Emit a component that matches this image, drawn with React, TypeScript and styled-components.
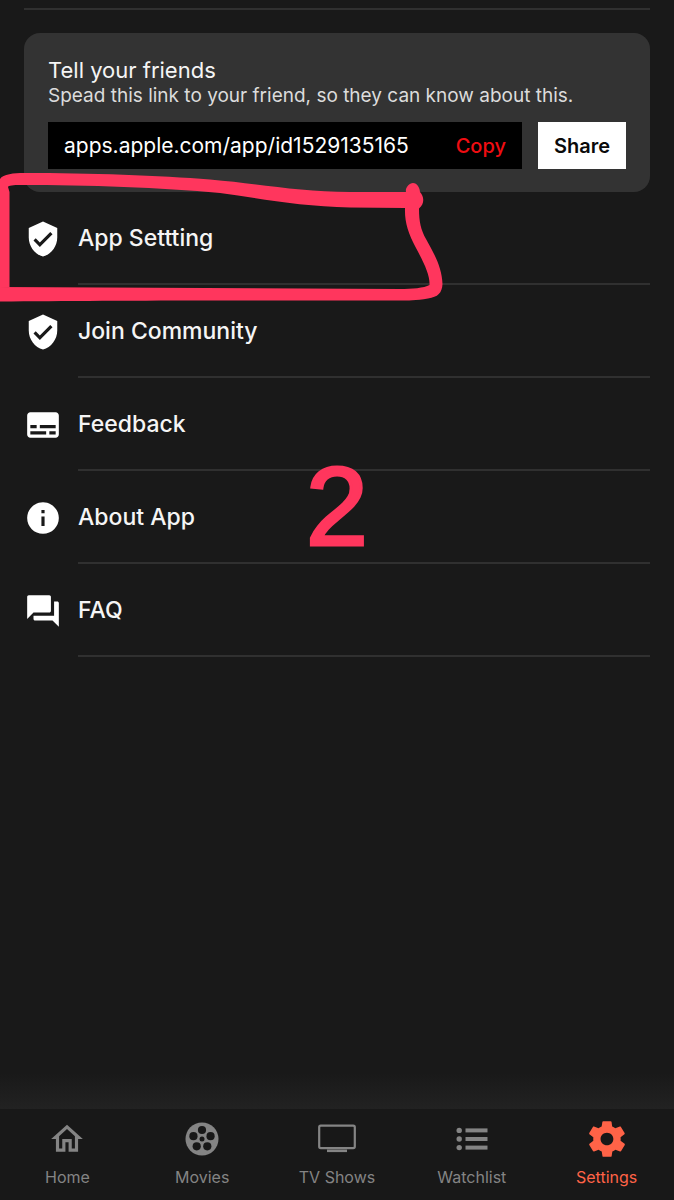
import React from 'react';
import styled, { createGlobalStyle } from 'styled-components';
import { MdVerifiedUser, MdSubtitles, MdInfo, MdQuestionAnswer, MdOutlineHome } from 'react-icons/md';
import { IoMdSettings } from 'react-icons/io';

const GlobalStyle = createGlobalStyle`
  * { box-sizing: border-box; }
  body { margin: 0; background: #191919; }
  button, input { font: inherit; border: 0; margin: 0; border-radius: 0; }
`;

const Page = styled.div`
  position: relative;
  min-height: 100vh;
  display: flex;
  flex-direction: column;
  overflow-x: hidden;
  background: #191919;
  color: #f5f5f5;
  font-family: Inter, 'Liberation Sans', sans-serif;
`;

const Content = styled.main`
  flex: 1;
  padding: 8px 24px 0;
`;

const TopRule = styled.hr`
  height: 2px;
  margin: 0 0 23px;
  border: 0;
  background: #303030;
`;

const Card = styled.section`
  padding: 24px 24px 23px;
  border-radius: 16px;
  background: #333333;
`;

const CardTitle = styled.h2`
  margin: 0;
  font-size: 22px;
  line-height: 26px;
  font-weight: 400;
`;

const CardText = styled.p`
  margin: 0 0 13px;
  font-size: 19px;
  line-height: 26px;
  color: #dcdcdc;
`;

const ShareRow = styled.div`
  display: flex;
  gap: 16px;
`;

const LinkBox = styled.div`
  flex: 1;
  min-width: 0;
  display: flex;
  align-items: center;
  height: 47px;
  padding: 0 16px;
  background: #000000;
`;

const LinkInput = styled.input`
  flex: 1;
  min-width: 0;
  padding: 0;
  background: transparent;
  color: #ffffff;
  font-size: 21px;
  line-height: 24px;
  outline: none;
`;

const CopyButton = styled.button`
  padding: 0;
  background: transparent;
  color: #f00d12;
  font-size: 20px;
  line-height: 24px;
  font-weight: 500;
`;

const ShareButton = styled.button`
  height: 47px;
  padding: 0 16px;
  background: #ffffff;
  color: #0a0a0a;
  font-size: 20px;
  font-weight: 600;
`;

const Menu = styled.ul`
  margin: 0;
  padding: 0;
  list-style: none;
`;

const MenuLink = styled.a`
  display: flex;
  align-items: center;
  gap: 16px;
  color: inherit;
  text-decoration: none;
  font-size: 23px;
  line-height: 28px;
  font-weight: 500;

  svg { flex: none; color: #ffffff; }
`;

const MenuLabel = styled.span`
  flex: 1;
  padding: 32px 0 31px;
  border-bottom: 2px solid #303030;
`;

const NavShade = styled.div`
  height: 36px;
  background: linear-gradient(#191919, #222222);
`;

const Footer = styled.footer`
  position: sticky;
  bottom: 0;
`;

const Nav = styled.nav`
  display: flex;
  height: 91px;
  background: #181818;
`;

const Tab = styled.a<{ $active?: boolean }>`
  flex: 1;
  display: flex;
  flex-direction: column;
  align-items: center;
  padding-top: 8px;
  gap: 6px;
  color: ${({ $active }) => ($active ? '#ff6347' : '#848484')};
  text-decoration: none;
  font-size: 16px;
  line-height: 20px;
`;

const TabIcon = styled.span`
  display: flex;
  align-items: center;
  justify-content: center;
  height: 44px;
`;

const Marker = styled.svg`
  position: absolute;
  top: 0;
  left: 0;
  pointer-events: none;
`;

const StepNumber = styled.span`
  position: absolute;
  top: 440px;
  left: 50%;
  transform: translateX(-50%);
  font-family: 'Liberation Sans', sans-serif;
  font-size: 112px;
  line-height: 134px;
  color: #ff365d;
  -webkit-text-stroke: 3px #ff365d;
  pointer-events: none;
`;

const holes = [0, 72, 144, 216, 288].map((deg) => {
  const a = (deg * Math.PI) / 180;
  return { x: 17 + 9 * Math.sin(a), y: 17 - 9 * Math.cos(a) };
});

const ReelIcon = () => (
  <svg width="34" height="34" viewBox="0 0 34 34" aria-hidden="true">
    <circle cx="17" cy="17" r="16.5" fill="currentColor" />
    {holes.map((h, i) => (
      <circle key={i} cx={h.x} cy={h.y} r="4.1" fill="#181818" />
    ))}
    <circle cx="17" cy="17" r="2.5" fill="#181818" />
  </svg>
);

const TvIcon = () => (
  <svg width="38" height="30" viewBox="0 0 38 30" aria-hidden="true">
    <rect x="1.2" y="1.7" width="35.6" height="22.4" rx="1.5" fill="none" stroke="currentColor" strokeWidth="2.2" />
    <path d="M9 25.500h20v2.600H9z" fill="currentColor" />
  </svg>
);

const ListIcon = () => (
  <svg width="32" height="24" viewBox="0 0 32 24" aria-hidden="true" fill="currentColor">
    {[3.4, 12, 20.6].map((y) => (
      <g key={y}>
        <circle cx="3.2" cy={y} r="2.7" />
        <rect x="9.5" y={y - 2} width="22" height="4" />
      </g>
    ))}
  </svg>
);

const menuItems = [
  { label: 'App Settting', icon: <MdVerifiedUser size={38} /> },
  { label: 'Join Community', icon: <MdVerifiedUser size={38} /> },
  { label: 'Feedback', icon: <MdSubtitles size={38} /> },
  { label: 'About App', icon: <MdInfo size={38} /> },
  { label: 'FAQ', icon: <MdQuestionAnswer size={38} /> },
];

const tabs = [
  { label: 'Home', icon: <MdOutlineHome size={38} /> },
  { label: 'Movies', icon: <ReelIcon /> },
  { label: 'TV Shows', icon: <TvIcon /> },
  { label: 'Watchlist', icon: <ListIcon /> },
  { label: 'Settings', icon: <IoMdSettings size={44} />, active: true },
];

export default function App() {
  return (
    <Page>
      <GlobalStyle />
      <Content>
        <TopRule />
        <Card>
          <CardTitle>Tell your friends</CardTitle>
          <CardText>Spead this link to your friend, so they can know about this.</CardText>
          <ShareRow>
            <LinkBox>
              <LinkInput readOnly aria-label="App link" value="apps.apple.com/app/id1529135165" />
              <CopyButton type="button">Copy</CopyButton>
            </LinkBox>
            <ShareButton type="button">Share</ShareButton>
          </ShareRow>
        </Card>
        <Menu>
          {menuItems.map((item) => (
            <li key={item.label}>
              <MenuLink href="#">
                {item.icon}
                <MenuLabel>{item.label}</MenuLabel>
              </MenuLink>
            </li>
          ))}
        </Menu>
      </Content>
      <Footer>
        <NavShade />
        <Nav>
          {tabs.map((tab) => (
            <Tab key={tab.label} href="#" $active={tab.active}>
              <TabIcon>{tab.icon}</TabIcon>
              {tab.label}
            </Tab>
          ))}
        </Nav>
      </Footer>
      <Marker width="460" height="310" viewBox="0 0 460 310" fill="#ff365d" aria-hidden="true">
        <path d="M0 179C3 174 14 173 24 173C90 173 160 175.500 210 179.500C262 184 300 192 350 192L406 192C405 188 409 183 413 183C417 183 420 188 420 192C424 196 425 204 419 208.500C419 222 421 230 426 239C435 255 442 268 442.500 284C442 293 438 297 428 298.500C416 300.500 408 300.500 400 300.500L220 300.500C140 300.500 60 301 0 301.500L0 287L400 289C412 289 424 288 429.500 285C430 275 424 263 416 248C408 233 404.500 222 405 208L350 207.500C300 206.500 260 198.500 220 193C160 187.500 90 185 20 185C14 185 8 185.500 8 187L9.500 192L9.500 287L0 287L0 179Z" />
      </Marker>
      <StepNumber>2</StepNumber>
    </Page>
  );
}
